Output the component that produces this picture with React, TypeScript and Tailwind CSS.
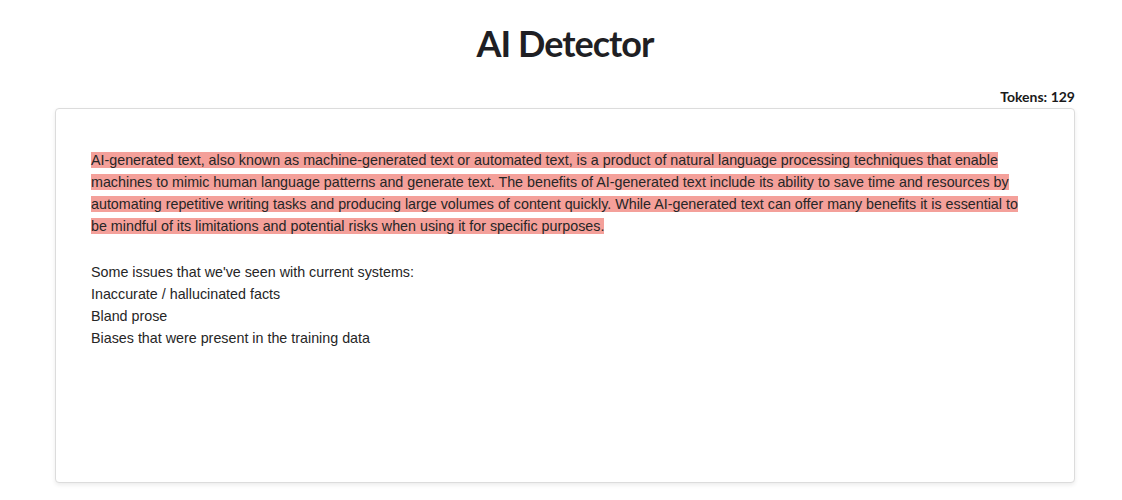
export default function App() {
    const highlighted =
        'AI-generated text, also known as machine-generated text or automated text, is a product of natural language processing techniques that enable machines to mimic human language patterns and generate text. The benefits of AI-generated text include its ability to save time and resources by automating repetitive writing tasks and producing large volumes of content quickly. While AI-generated text can offer many benefits it is essential to be mindful of its limitations and potential risks when using it for specific purposes.';

    const plainLines = [
        "Some issues that we've seen with current systems:",
        'Inaccurate / hallucinated facts',
        'Bland prose',
        'Biases that were present in the training data',
    ];

    return (
        <div className="min-h-screen bg-white pl-[55px] pr-[47px]">
            <h1 className="pt-[22px] text-center text-[36px] font-bold leading-[42px] text-[#1f1f24] font-['Lato','Inter',sans-serif] tracking-[-1px]">
                AI Detector
            </h1>
            <div className="mt-[24px] flex justify-end">
                <span className="text-[14px] font-bold leading-[18px] text-[#1a1a1a] font-['Lato','Inter',sans-serif]">
                    Tokens: 129
                </span>
            </div>
            <div className="mt-[2px] h-[375px] rounded-[4px] border border-[#dcdcdc] bg-white shadow-[0_2px_4px_rgba(0,0,0,0.08)] pl-[35px] pr-[44px] pt-[40px]">
                <div className="text-[14.3px] leading-[22px] text-[#262626] font-['Liberation_Sans',Arial,sans-serif]">
                    <p>
                        <span className="bg-[#f4a09a]">{highlighted}</span>
                    </p>
                    <p className="mt-[24px]">
                        {plainLines.map((line) => (
                            <span key={line} className="block">
                                {line}
                            </span>
                        ))}
                    </p>
                </div>
            </div>
        </div>
    );
}
